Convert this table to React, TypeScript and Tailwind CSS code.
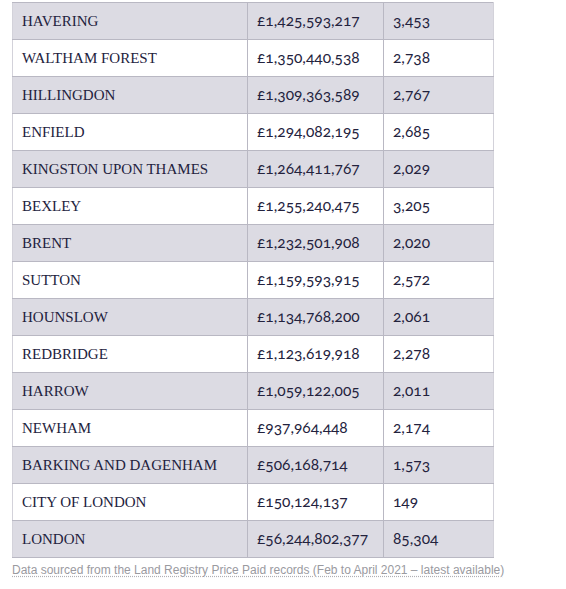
import React from "react";

const rows: [string, string, string][] = [
  ["HAVERING", "£1,425,593,217", "3,453"],
  ["WALTHAM FOREST", "£1,350,440,538", "2,738"],
  ["HILLINGDON", "£1,309,363,589", "2,767"],
  ["ENFIELD", "£1,294,082,195", "2,685"],
  ["KINGSTON UPON THAMES", "£1,264,411,767", "2,029"],
  ["BEXLEY", "£1,255,240,475", "3,205"],
  ["BRENT", "£1,232,501,908", "2,020"],
  ["SUTTON", "£1,159,593,915", "2,572"],
  ["HOUNSLOW", "£1,134,768,200", "2,061"],
  ["REDBRIDGE", "£1,123,619,918", "2,278"],
  ["HARROW", "£1,059,122,005", "2,011"],
  ["NEWHAM", "£937,964,448", "2,174"],
  ["BARKING AND DAGENHAM", "£506,168,714", "1,573"],
  ["CITY OF LONDON", "£150,124,137", "149"],
  ["LONDON", "£56,244,802,377", "85,304"],
];

export default function App() {
  return (
    <div className="w-[566px] h-[589px] bg-white pt-[2px] pl-[12px]">
      <table className="w-[481px] border-collapse table-fixed text-[#23223d]">
        <colgroup>
          <col className="w-[235px]" />
          <col className="w-[136px]" />
          <col className="w-[110px]" />
        </colgroup>
        <tbody>
          {rows.map((r, i) => (
            <tr
              key={r[0]}
              className={`h-[37px] ${i % 2 === 0 ? "bg-[#dcdbe3]" : "bg-white"}`}
            >
              <td className="border-y border-[#b9b8c3] border-l border-l-[#d3d2da] border-r border-r-[#b9b8c3] pl-[9px] p-0 text-[15px] font-['Liberation_Serif',serif] whitespace-nowrap">
                {r[0]}
              </td>
              <td className="border-y border-[#b9b8c3] border-r border-r-[#b9b8c3] pl-[9px] p-0 text-[15.5px] font-['Lato',sans-serif] [font-variant-numeric:oldstyle-nums] whitespace-nowrap">
                {r[1]}
              </td>
              <td className="border-y border-[#b9b8c3] border-r border-r-[#d3d2da] pl-[9px] p-0 text-[15.5px] font-['Lato',sans-serif] [font-variant-numeric:oldstyle-nums] whitespace-nowrap">
                {r[2]}
              </td>
            </tr>
          ))}
        </tbody>
      </table>
      <div className="mt-[5px] text-[12px] leading-[15px] text-[#9a9a9f] font-['Liberation_Sans',sans-serif]">
        <span className="underline decoration-dotted decoration-[#b0b0b5] underline-offset-2">
          Data sourced from the Land Registry Price Paid records (Feb to April 2021 – latest available)
        </span>
      </div>
    </div>
  );
}
